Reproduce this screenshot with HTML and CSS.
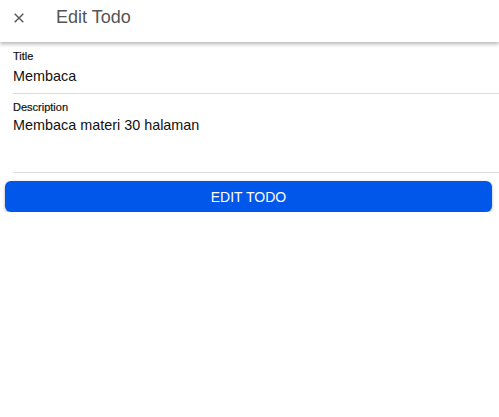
FILE: index.html
```html
<!DOCTYPE html>
<html>
<head>
<meta charset="utf-8">
<link rel="stylesheet" href="styles.css">
</head>
<body>
<header class="topbar">
  <button class="close" aria-label="close">
    <svg width="10" height="10" viewBox="0 0 10 10"><path d="M0.7 0.7L9.3 9.3M9.3 0.7L0.7 9.3" stroke="#555" stroke-width="1.4" fill="none"/></svg>
  </button>
  <h1 class="title">Edit Todo</h1>
</header>
<main class="form">
  <div class="field">
    <label class="label">Title</label>
    <div class="value">Membaca</div>
  </div>
  <div class="field field-area">
    <label class="label">Description</label>
    <div class="value">Membaca materi 30 halaman</div>
  </div>
  <button class="submit">EDIT TODO</button>
</main>
</body>
</html>
```
FILE: styles.css
```css
* { box-sizing: border-box; }
html, body { margin: 0; padding: 0; background: #fff; font-family: "Liberation Sans", Arial, sans-serif; }
.topbar {
  height: 42px;
  display: flex;
  align-items: center;
  padding-bottom: 7px;
  background: #fff;
  box-shadow: 0 2px 4px rgba(0,0,0,0.3);
  position: relative;
  z-index: 1;
}
.close {
  border: none;
  background: none;
  padding: 0;
  margin-left: 14px;
  width: 10px;
  height: 10px;
  display: flex;
}
.title {
  margin: 0 0 0 32px;
  font-size: 18px;
  font-weight: normal;
  color: #555;
}
.form {
  display: flex;
  flex-direction: column;
  padding-top: 8px;
}
.field {
  margin-left: 13px;
  border-bottom: 1px solid #ddd;
  display: flex;
  flex-direction: column;
  height: 44px;
}
.field-area { height: 79px; padding-top: 7px; }
.label { font-size: 11px; color: #111; line-height: 13px; -webkit-text-stroke: 0.2px #111; }
.value { font-size: 14.4px; color: #111; line-height: 18px; margin-top: 4px; }
.field-area .value { margin-top: 2px; }
.submit {
  margin: 8px 7px 0 5px;
  height: 31px;
  border: none;
  border-radius: 6px;
  background: #0057e9;
  color: #fff;
  font-family: "Liberation Sans", Arial, sans-serif;
  font-size: 14px;
  box-shadow: 0 1px 3px rgba(0,0,0,0.35);
}
```
